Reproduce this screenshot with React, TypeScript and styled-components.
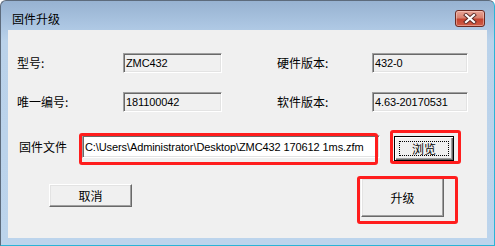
import React from 'react';
import styled, { createGlobalStyle } from 'styled-components';

const Global = createGlobalStyle`
  html, body { margin: 0; padding: 0; background: #ffffff; }
  body { width: 495px; height: 246px; overflow: hidden; }
`;

const cjk = `"Noto Sans CJK SC", "Noto Sans", sans-serif`;
const latin = `"Liberation Sans", Arial, sans-serif`;

const Window = styled.div`
  box-sizing: border-box;
  width: 495px;
  height: 246px;
  display: flex;
  flex-direction: column;
  padding: 0 7px 7px 7px;
  border: 1px solid;
  border-color: #5d6b7c #2bb4d6 #2bb4d6 #5d6b7c;
  border-radius: 6px 6px 0 0;
  background: linear-gradient(to bottom, #97b2d1 0px, #adc7e3 26px, #bad2ea 40px, #bcd4ec 100%);
`;

const TitleBar = styled.div`
  height: 29px;
  box-sizing: border-box;
  padding: 6px 2px 0 4px;
  display: flex;
  align-items: center;
  justify-content: space-between;
`;

const Title = styled.span`
  font-family: ${cjk};
  font-size: 12px;
  color: #000;
  line-height: 17px;
`;

const CloseButton = styled.div`
  box-sizing: border-box;
  width: 30px;
  height: 17px;
  border: 1px solid #6b2a22;
  border-radius: 3px;
  background: linear-gradient(to bottom, #e8a496 0%, #d8816f 45%, #c4432f 55%, #cf5e48 100%);
  box-shadow: inset 0 0 0 1px rgba(255, 220, 210, 0.45);
  display: flex;
  align-items: center;
  justify-content: center;
`;

const Client = styled.div`
  flex: 1;
  position: relative;
  box-sizing: border-box;
  background: #f0f0f0;
  padding: 23px 0 0 9px;
  font-family: ${cjk};
  font-size: 12px;
  color: #000;
`;

const Row = styled.div<{ $top: number }>`
  display: flex;
  align-items: flex-start;
  margin-top: ${(p) => p.$top}px;
`;

const Label = styled.div<{ $w: number; $ml?: number; $h: number }>`
  width: ${(p) => p.$w}px;
  margin-left: ${(p) => p.$ml ?? 0}px;
  height: ${(p) => p.$h}px;
  line-height: ${(p) => p.$h}px;
  white-space: nowrap;
`;

const Field = styled.div<{ $w: number; $h: number; $white?: boolean }>`
  box-sizing: border-box;
  width: ${(p) => p.$w}px;
  height: ${(p) => p.$h}px;
  background: ${(p) => (p.$white ? '#ffffff' : '#f0f0f0')};
  border: 1px solid;
  border-color: #a0a0a0 #ffffff #ffffff #a0a0a0;
  box-shadow: inset 1px 1px 0 #696969, inset -1px -1px 0 #e3e3e3;
  padding-left: 2px;
  display: flex;
  align-items: center;
  font-family: ${latin};
  font-size: 11px;
  letter-spacing: -0.1px;
  white-space: nowrap;
  overflow: hidden;
`;

const Button = styled.div<{ $w: number; $h: number; $ml?: number; $mt?: number; $default?: boolean }>`
  box-sizing: border-box;
  width: ${(p) => p.$w}px;
  height: ${(p) => p.$h}px;
  margin-left: ${(p) => p.$ml ?? 0}px;
  margin-top: ${(p) => p.$mt ?? 0}px;
  background: #f0f0f0;
  border: 1px solid;
  border-color: ${(p) => (p.$default ? '#000000' : '#ffffff #696969 #696969 #ffffff')};
  box-shadow: ${(p) =>
    p.$default
      ? 'inset 1px 1px 0 #ffffff, inset -1px -1px 0 #696969, inset -2px -2px 0 #a0a0a0'
      : 'inset -1px -1px 0 #a0a0a0, inset 1px 1px 0 #e3e3e3'};
  display: flex;
  align-items: center;
  justify-content: center;
  padding: ${(p) => (p.$default ? '4px' : '0')};
`;

const Focus = styled.div`
  box-sizing: border-box;
  width: 100%;
  height: 100%;
  border: 1px dotted #000;
  display: flex;
  align-items: center;
  justify-content: center;
`;

const Mark = styled.div<{ $x: number; $y: number; $w: number; $h: number }>`
  position: absolute;
  left: ${(p) => p.$x}px;
  top: ${(p) => p.$y}px;
  width: ${(p) => p.$w}px;
  height: ${(p) => p.$h}px;
  box-sizing: border-box;
  border: 3px solid #ff1d1d;
  border-radius: 3px;
  pointer-events: none;
`;

export default function App() {
  return (
    <>
      <Global />
      <Window>
        <TitleBar>
          <Title>固件升级</Title>
          <CloseButton>
            <svg width="14" height="11" viewBox="0 0 14 11">
              <path d="M3 2 L11 9 M11 2 L3 9" stroke="#5a2a26" strokeWidth="4" strokeLinecap="square" />
              <path d="M3 2 L11 9 M11 2 L3 9" stroke="#ffffff" strokeWidth="2.2" strokeLinecap="square" />
            </svg>
          </CloseButton>
        </TitleBar>
        <Client>
          <Row $top={0}>
            <Label $w={106} $h={20}>型号:</Label>
            <Field $w={99} $h={20}>ZMC432</Field>
            <Label $w={95} $ml={55} $h={20}>硬件版本:</Label>
            <Field $w={96} $h={20}>432-0</Field>
          </Row>
          <Row $top={19}>
            <Label $w={106} $h={20}>唯一编号:</Label>
            <Field $w={99} $h={20}>181100042</Field>
            <Label $w={95} $ml={55} $h={20}>软件版本:</Label>
            <Field $w={96} $h={20}>4.63-20170531</Field>
          </Row>
          <Row $top={23}>
            <Label $w={63} $ml={2} $h={23}>固件文件</Label>
            <Field $w={298} $h={23} $white>
              C:\Users\Administrator\Desktop\ZMC432 170612 1ms.zfm
            </Field>
            <Button $w={60} $h={25} $ml={14} $mt={1} $default>
              <Focus>浏览</Focus>
            </Button>
          </Row>
          <Row $top={17}>
            <Button $w={83} $h={23} $ml={32} $mt={6}>取消</Button>
            <Button $w={83} $h={39} $ml={229}>升级</Button>
          </Row>
          <Mark $x={71} $y={103} $w={299} $h={32} />
          <Mark $x={382} $y={100} $w={71} $h={34} />
          <Mark $x={349} $y={146} $w={101} $h={48} />
        </Client>
      </Window>
    </>
  );
}
